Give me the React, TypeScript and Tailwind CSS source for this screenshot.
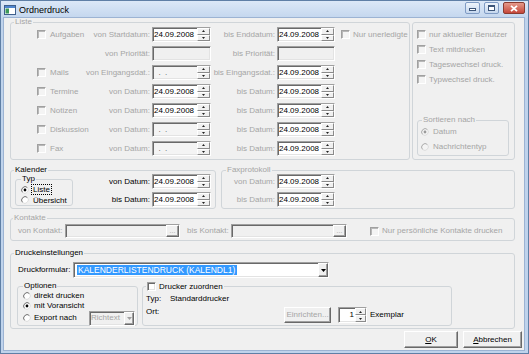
import type { ReactNode } from "react";

const off = "text-[#a5a5a5]";
const sunken =
  "border border-t-[#a0a0a0] border-l-[#a0a0a0] border-r-white border-b-white shadow-[inset_1px_1px_0_#696969,inset_-1px_-1px_0_#e3e3e3]";
const raised =
  "border border-t-white border-l-white border-r-[#696969] border-b-[#696969] shadow-[inset_-1px_-1px_0_#a0a0a0]";
const half =
  "flex flex-1 items-center justify-center border border-t-white border-l-white border-r-[#8a8a8a] border-b-[#8a8a8a] bg-[#f0f0f0]";

function Group({
  title,
  dim,
  legend = "ml-[3px]",
  className = "",
  children,
}: {
  title?: ReactNode;
  dim?: boolean;
  legend?: string;
  className?: string;
  children: ReactNode;
}) {
  return (
    <fieldset className={`min-w-0 rounded-[3px] border border-[#d0d5d9] ${className}`}>
      {title !== undefined ? (
        <legend className={`px-[1px] leading-[8px] ${legend} ${dim ? off : ""}`}>{title}</legend>
      ) : null}
      {children}
    </fieldset>
  );
}

function Check({ enabled = false, className = "" }: { enabled?: boolean; className?: string }) {
  return (
    <span
      className={`block h-[9px] w-[9px] shrink-0 border border-t-[#a0a0a0] border-l-[#a0a0a0] border-r-white border-b-white ${
        enabled
          ? "bg-white shadow-[inset_1px_1px_0_#696969,inset_-1px_-1px_0_#e3e3e3]"
          : "bg-[#f4f4f4] shadow-[inset_1px_1px_0_#b8b8b8]"
      } ${className}`}
    />
  );
}

function Radio({ checked = false, enabled = true }: { checked?: boolean; enabled?: boolean }) {
  return (
    <svg width="8" height="8" viewBox="0 0 8 8" className="shrink-0">
      <circle cx="4" cy="4" r="3.5" fill={enabled ? "#fff" : "#f4f4f4"} />
      <path d="M1.53 6.47A3.5 3.5 0 0 1 6.47 1.53" fill="none" stroke={enabled ? "#6d6d6d" : "#aaaaaa"} />
      <path d="M6.47 1.53A3.5 3.5 0 0 1 1.53 6.47" fill="none" stroke="#dcdcdc" />
      {checked ? <circle cx="4" cy="4" r="1.4" fill={enabled ? "#000" : "#9a9a9a"} /> : null}
    </svg>
  );
}

function Spin({ w = "w-[13px]" }: { w?: string }) {
  return (
    <div className={`flex shrink-0 flex-col ${w}`}>
      <div className={half}>
        <svg width="3" height="2" viewBox="0 0 3 2">
          <path d="M1.5 0 3 2H0z" fill="#222" />
        </svg>
      </div>
      <div className={half}>
        <svg width="3" height="2" viewBox="0 0 3 2">
          <path d="M0 0h3L1.5 2z" fill="#222" />
        </svg>
      </div>
    </div>
  );
}

function DropBtn({ dim }: { dim?: boolean }) {
  return (
    <div className={`ml-auto flex w-[10px] shrink-0 items-center justify-center self-stretch bg-[#f0f0f0] ${raised}`}>
      <svg width="5" height="3" viewBox="0 0 5 3">
        <path d="M0 0h5L2.5 3z" fill={dim ? "#a0a0a0" : "#000"} />
      </svg>
    </div>
  );
}

function DateBox({ value, w }: { value?: string; w: string }) {
  return (
    <div className={`ml-[2px] flex h-[15px] shrink-0 ${value ? "bg-white" : "bg-[#f4f4f4]"} ${sunken} ${w}`}>
      <span className="flex-1 self-center whitespace-pre pl-[1px] leading-[10px]">
        {value ?? <span className="text-[#555]">{"  .  ."}</span>}
      </span>
      <Spin />
    </div>
  );
}

function Plain({ w }: { w: string }) {
  return <div className={`ml-[2px] h-[15px] shrink-0 bg-[#f0f0f0] ${sunken} ${w}`} />;
}

function Label({ w, dim, children }: { w: string; dim?: boolean; children: ReactNode }) {
  return (
    <div className={`flex shrink-0 justify-end whitespace-nowrap ${w} ${dim ? off : ""}`}>
      <span>{children}</span>
    </div>
  );
}

function Pick({ w }: { w: string }) {
  return (
    <div className={`flex h-[14px] shrink-0 justify-end bg-[#f0f0f0] ${sunken} ${w}`}>
      <div className={`flex w-[13px] items-end justify-center bg-[#f0f0f0] pb-[2px] text-[7px] leading-[6px] ${off} ${raised}`}>
        ...
      </div>
    </div>
  );
}

function Btn({ w, h = "h-[17px]", dim, children }: { w: string; h?: string; dim?: boolean; children: ReactNode }) {
  return (
    <div className={`flex shrink-0 items-center justify-center bg-[#f0f0f0] ${raised} ${w} ${h} ${dim ? off : ""}`}>
      {children}
    </div>
  );
}

const rows: { name?: string; von: string; a?: string | null; bis: string; b?: string | null; extra?: string }[] = [
  { name: "Aufgaben", von: "von Startdatum:", a: "24.09.2008", bis: "bis Enddatum:", b: "24.09.2008", extra: "Nur unerledigte" },
  { von: "von Priorität:", a: null, bis: "bis Priorität:", b: null },
  { name: "Mails", von: "von Eingangsdat.:", bis: "bis Eingangsdat.:", b: "24.09.2008" },
  { name: "Termine", von: "von Datum:", a: "24.09.2008", bis: "bis Datum:", b: "24.09.2008" },
  { name: "Notizen", von: "von Datum:", a: "24.09.2008", bis: "bis Datum:", b: "24.09.2008" },
  { name: "Diskussion", von: "von Datum:", bis: "bis Datum:", b: "24.09.2008" },
  { name: "Fax", von: "von Datum:", bis: "bis Datum:", b: "24.09.2008" },
];

const options = ["nur aktueller Benutzer", "Text mitdrucken", "Tageswechsel druck.", "Typwechsel druck."];

function TitleBar() {
  return (
    <div className="flex h-[17px] shrink-0 items-center bg-gradient-to-b from-[#dce8f7] to-[#c3d6ee] pl-[3px] pr-[3px]">
      <svg width="12" height="10" viewBox="0 0 12 10" className="shrink-0">
        <rect x="0.5" y="0.5" width="11" height="9" fill="#fff" stroke="#3f5f8c" />
        <rect x="1" y="1" width="10" height="2" fill="#4f86cf" />
        <rect x="1.5" y="3.5" width="3.5" height="5" fill="#3f9a5a" />
      </svg>
      <span className="ml-[3px] text-[9px] leading-[10px] text-black">Ordnerdruck</span>
      <div className="ml-auto flex gap-[4px] self-start pt-[1px]">
        <div className="flex h-[12px] w-[15px] items-end justify-center rounded-[2px] border border-[#7f9bc4] bg-gradient-to-b from-[#eef4fb] to-[#c5d7ee] pb-[2px]">
          <span className="block h-[3px] w-[7px] border border-[#3c5579] bg-white" />
        </div>
        <div className="flex h-[12px] w-[15px] items-center justify-center rounded-[2px] border border-[#7f9bc4] bg-gradient-to-b from-[#eef4fb] to-[#c5d7ee]">
          <span className="block h-[6px] w-[7px] border border-t-2 border-[#3c5579] bg-white" />
        </div>
        <div className="flex h-[12px] w-[22px] items-center justify-center rounded-[2px] border border-[#8a3b30] bg-gradient-to-b from-[#e59a8b] to-[#c4453a]">
          <svg width="8" height="7" viewBox="0 0 8 7">
            <path d="M1 0.8 7 6.2M7 0.8 1 6.2" stroke="#fff" strokeWidth="1.8" />
          </svg>
        </div>
      </div>
    </div>
  );
}

export default function App() {
  return (
    <div className="flex h-[354px] w-[529px] flex-col border border-[#5f7fa6] bg-[#bfd3ec] font-['Liberation_Sans',Arial,sans-serif] text-[8px] leading-[10px] text-black">
      <TitleBar />
      <div className="mb-[3px] ml-[3px] mr-[4px] flex flex-1 flex-col bg-[#f0f0f0] pl-[6px] pr-[9px] shadow-[0_0_0_1px_#9cb3d3]">
        {/* Liste + Zusatzoptionen */}
        <div className="flex gap-[2px]">
          <Group title="Liste" dim className="w-[400px] shrink-0">
            <div className="flex flex-col gap-[4px] pb-[3px] pl-[26px] pt-[1px]">
              {rows.map((r, i) => (
                <div key={i} className="flex h-[15px] items-center">
                  <div className="flex w-[48px] shrink-0 items-center gap-[4px]">
                    {r.name ? (
                      <>
                        <Check />
                        <span className={`whitespace-nowrap ${off}`}>{r.name}</span>
                      </>
                    ) : null}
                  </div>
                  <Label w="w-[65px]" dim>
                    {r.von}
                  </Label>
                  {r.a === null ? <Plain w="w-[59px]" /> : <DateBox value={r.a} w="w-[59px]" />}
                  <Label w="w-[64px]" dim>
                    {r.bis}
                  </Label>
                  {r.b === null ? <Plain w="w-[58px]" /> : <DateBox value={r.b} w="w-[58px]" />}
                  {r.extra ? (
                    <div className="ml-[6px] flex items-center gap-[3px]">
                      <Check />
                      <span className={`whitespace-nowrap ${off}`}>{r.extra}</span>
                    </div>
                  ) : null}
                </div>
              ))}
            </div>
          </Group>

          <Group className="mt-[4px] flex-1">
            <div className="flex flex-col pl-[4px] pr-[5px] pt-[4px]">
              {options.map((o) => (
                <div key={o} className="flex h-[15px] items-center gap-[3px]">
                  <Check />
                  <span className={`whitespace-nowrap ${off}`}>{o}</span>
                </div>
              ))}
              <Group title="Sortieren nach" dim legend="ml-[4px]" className="mb-[3px] ml-0 mt-[29px]">
                <div className="flex flex-col gap-[1px] pb-[1px] pl-[3px] pt-[1px]">
                  <div className="flex h-[14px] items-center gap-[4px]">
                    <Radio checked enabled={false} />
                    <span className={off}>Datum</span>
                  </div>
                  <div className="flex h-[14px] items-center gap-[4px]">
                    <Radio enabled={false} />
                    <span className={off}>Nachrichtentyp</span>
                  </div>
                </div>
              </Group>
            </div>
          </Group>
        </div>

        {/* Kalender + Faxprotokoll */}
        <div className="mt-[6px] flex gap-[5px]">
          <Group title="Kalender" className="w-[206px] shrink-0">
            <div className="flex pb-[1px] pr-[4px]">
              <Group title="Typ" legend="ml-[5px]" className="ml-[4px] mt-[1px] w-[58px] shrink-0 self-start">
                <div className="flex flex-col pl-[5px] pt-[1px]">
                  <div className="flex h-[11px] items-center gap-[2px]">
                    <Radio checked />
                    <span className="border border-dotted border-black px-[1px] leading-[9px]">Liste</span>
                  </div>
                  <div className="flex h-[10px] items-center gap-[2px]">
                    <Radio />
                    <span className="border border-transparent px-[1px] leading-[9px]">Übersicht</span>
                  </div>
                </div>
              </Group>
              <div className="flex flex-col gap-[3px]">
                <div className="flex items-center">
                  <Label w="w-[77px]">von Datum:</Label>
                  <DateBox value="24.09.2008" w="w-[59px]" />
                </div>
                <div className="flex items-center">
                  <Label w="w-[77px]">bis Datum:</Label>
                  <DateBox value="24.09.2008" w="w-[59px]" />
                </div>
              </div>
            </div>
          </Group>

          <Group title="Faxprotokoll" dim legend="ml-[4px]" className="flex-1">
            <div className="flex flex-col gap-[3px] pb-[1px]">
              <div className="flex items-center">
                <Label w="w-[53px]" dim>
                  von Datum:
                </Label>
                <DateBox value="24.09.2008" w="w-[58px]" />
              </div>
              <div className="flex items-center">
                <Label w="w-[53px]" dim>
                  bis Datum:
                </Label>
                <DateBox value="24.09.2008" w="w-[58px]" />
              </div>
            </div>
          </Group>
        </div>

        {/* Kontakte */}
        <Group title="Kontakte" dim legend="ml-[2px]" className="mt-[5px]">
          <div className="py-[2px] pl-[7px]">
            <div className="flex h-[14px] items-center">
              <span className={`w-[47px] shrink-0 whitespace-nowrap ${off}`}>von Kontakt:</span>
              <Pick w="w-[115px]" />
              <span className={`ml-[7px] w-[44px] shrink-0 whitespace-nowrap ${off}`}>bis Kontakt:</span>
              <Pick w="w-[116px]" />
              <Check className="ml-[23px]" />
              <span className={`ml-[3px] whitespace-nowrap ${off}`}>Nur persönliche Kontakte drucken</span>
            </div>
          </div>
        </Group>

        {/* Druckeinstellungen */}
        <Group title="Druckeinstellungen" className="mt-[8px]">
          <div className="flex flex-col pb-[2px]">
            <div className="flex items-center pl-[7px] pt-[5px]">
              <span className="w-[55px] shrink-0 whitespace-nowrap">Druckformular:</span>
              <div className={`flex h-[16px] w-[256px] shrink-0 items-center bg-white ${sunken}`}>
                <span className="ml-[3px] w-[160px] whitespace-nowrap bg-[#3399ff] px-[1px] text-[8.5px] leading-[10px] text-white">
                  KALENDERLISTENDRUCK (KALENDL1)
                </span>
                <DropBtn />
              </div>
            </div>

            <div className="mt-[4px] flex pl-[6px]">
              <Group title="Optionen" legend="ml-[5px]" className="w-[121px] shrink-0">
                <div className="flex flex-col pl-[5px] pr-[2px]">
                  <div className="flex h-[11px] items-center gap-[3px]">
                    <Radio />
                    <span>direkt drucken</span>
                  </div>
                  <div className="flex h-[10px] items-center gap-[3px]">
                    <Radio checked />
                    <span>mit Voransicht</span>
                  </div>
                  <div className="flex h-[14px] items-center gap-[3px]">
                    <Radio />
                    <span className="whitespace-nowrap">Export nach</span>
                    <div className={`ml-auto flex h-[15px] w-[46px] shrink-0 items-center bg-[#f0f0f0] ${sunken}`}>
                      <span className={`pl-[1px] ${off}`}>Richtext</span>
                      <DropBtn dim />
                    </div>
                  </div>
                </div>
              </Group>

              <Group
                title={
                  <span className="flex items-center gap-[3px]">
                    <Check enabled />
                    <span>Drucker zuordnen</span>
                  </span>
                }
                legend="ml-[3px]"
                className="ml-[4px] w-[310px] shrink-0"
              >
                <div className="flex flex-col pb-[2px] pl-[3px] pt-[2px]">
                  <div className="flex h-[11px] items-center">
                    <span className="w-[24px] shrink-0">Typ:</span>
                    <span>Standarddrucker</span>
                  </div>
                  <div className="mt-[3px] flex items-start">
                    <span className="w-[138px] shrink-0">Ort:</span>
                    <Btn w="w-[47px]" h="h-[16px]" dim>
                      Einrichten...
                    </Btn>
                    <div className={`ml-[7px] flex h-[16px] w-[29px] shrink-0 bg-white ${sunken}`}>
                      <span className="flex-1 self-center pr-[1px] text-right">1</span>
                      <Spin w="w-[11px]" />
                    </div>
                    <span className="ml-[3px] self-center">Exemplar</span>
                  </div>
                </div>
              </Group>
            </div>
          </div>
        </Group>

        {/* Buttons */}
        <div className="-mr-[7px] mt-[2px] flex justify-end gap-[5px]">
          <Btn w="w-[54px]">
            <span>
              <span className="underline">O</span>K
            </span>
          </Btn>
          <Btn w="w-[59px]">
            <span>
              <span className="underline">A</span>bbrechen
            </span>
          </Btn>
        </div>
      </div>
    </div>
  );
}
